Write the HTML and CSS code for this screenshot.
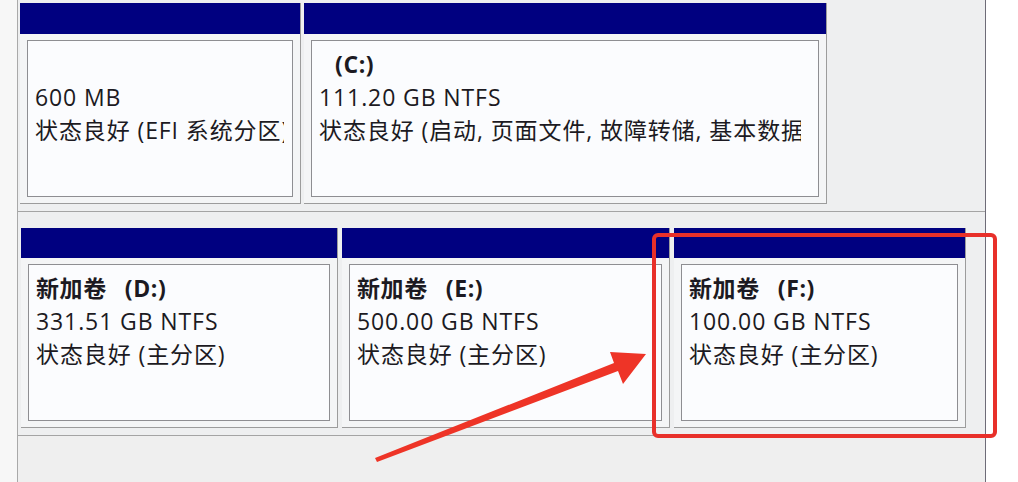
FILE: index.html
```html
<!DOCTYPE html>
<html lang="zh-CN">
<head>
<meta charset="utf-8">
<title>磁盘管理</title>
<link rel="stylesheet" href="styles.css">
</head>
<body>
<div class="window">
  <div class="gutter"></div>
  <div class="main">
    <div class="disk disk-top">
      <div class="cell w-efi">
        <div class="hdr"></div>
        <div class="body">
          <div class="box">
            <div class="clip">
              <div class="line name">&nbsp;</div>
              <div class="line">600 MB</div>
              <div class="line">状态良好 (EFI 系统分区)</div>
            </div>
          </div>
        </div>
      </div>
      <div class="cell w-c">
        <div class="hdr"></div>
        <div class="body">
          <div class="box">
            <div class="clip clip-c">
              <div class="line name"><span class="indent">(C:)</span></div>
              <div class="line">111.20 GB NTFS</div>
              <div class="line">状态良好 (启动, 页面文件, 故障转储, 基本数据分区)</div>
            </div>
          </div>
        </div>
      </div>
    </div>
    <div class="disk disk-bottom">
      <div class="cell w-d">
        <div class="hdr"></div>
        <div class="body">
          <div class="box">
            <div class="clip">
              <div class="line name">新加卷<span class="drive">(D:)</span></div>
              <div class="line">331.51 GB NTFS</div>
              <div class="line">状态良好 (主分区)</div>
            </div>
          </div>
        </div>
      </div>
      <div class="cell w-e">
        <div class="hdr"></div>
        <div class="body">
          <div class="box">
            <div class="clip">
              <div class="line name">新加卷<span class="drive">(E:)</span></div>
              <div class="line">500.00 GB NTFS</div>
              <div class="line">状态良好 (主分区)</div>
            </div>
          </div>
        </div>
      </div>
      <div class="cell w-f">
        <div class="hdr"></div>
        <div class="body">
          <div class="box">
            <div class="clip">
              <div class="line name">新加卷<span class="drive">(F:)</span></div>
              <div class="line">100.00 GB NTFS</div>
              <div class="line">状态良好 (主分区)</div>
            </div>
          </div>
        </div>
      </div>
    </div>
    <div class="rest"></div>
  </div>
  <div class="edge"></div>
</div>
<div class="highlight"></div>
<svg class="arrow" width="1018" height="482" viewBox="0 0 1018 482" aria-hidden="true">
  <polygon points="646,354 610,352 614,363 375,458 377,462 618,371 623,384" fill="#ee3427"/>
</svg>
</body>
</html>
```
FILE: styles.css
```css
html, body {
  margin: 0;
  padding: 0;
}
body {
  width: 1018px;
  height: 482px;
  overflow: hidden;
  background: #efefef;
  font-family: "Open Sans", "Noto Sans CJK SC", sans-serif;
  color: #1c1a22;
  position: relative;
}
.window {
  display: flex;
  height: 482px;
}
.gutter {
  width: 17px;
  flex: none;
  background: #f7f7f7;
  border-right: 1px solid #a9a9a9;
}
.main {
  flex: 1;
  display: flex;
  flex-direction: column;
  background: #eeeff0;
}
.edge {
  width: 32px;
  flex: none;
  background: #ffffff;
  border-left: 1px solid #6e6c78;
}
.disk {
  display: flex;
  align-items: flex-start;
  border-bottom: 1px solid #a4a4a4;
  box-sizing: border-box;
}
.disk-top {
  height: 212px;
  padding: 3px 0 0 2px;
  gap: 3px;
}
.disk-bottom {
  height: 224px;
  padding: 16px 0 0 3px;
  gap: 4px;
}
.rest {
  flex: 1;
  background: #efefef;
}
.cell {
  display: flex;
  flex-direction: column;
  background: #f4f5f6;
  border-right: 1px solid #9c9c9c;
  border-bottom: 1px solid #9c9c9c;
  box-sizing: border-box;
}
.disk-top .cell { height: 201px; }
.disk-bottom .cell { height: 200px; }
.w-efi { width: 281px; }
.w-c { width: 523px; }
.w-d { width: 317px; }
.w-e { width: 328px; }
.w-f { width: 292px; }
.hdr {
  height: 31px;
  flex: none;
  background: #000080;
}
.disk-bottom .hdr { height: 30px; }
.body {
  flex: 1;
  display: flex;
  padding: 6px 7px 6px 7px;
  box-sizing: border-box;
}
.box {
  flex: 1;
  background: #fbfcfe;
  border: 1px solid #8e8e92;
  padding: 7px 8px 0 7px;
  overflow: hidden;
}
.clip {
  overflow: hidden;
  white-space: nowrap;
}
.clip-c {
  margin-right: 9px;
}
.line {
  font-size: 23px;
  line-height: 33px;
  height: 33px;
  letter-spacing: 0.9px;
}
.name {
  font-weight: 700;
  letter-spacing: 0.6px;
}
.indent {
  padding-left: 16px;
}
.drive {
  margin-left: 18px;
}
.highlight {
  position: absolute;
  left: 652px;
  top: 233px;
  width: 337px;
  height: 197px;
  border: 4px solid #e8302a;
  border-radius: 6px;
}
.arrow {
  position: absolute;
  left: 0;
  top: 0;
  pointer-events: none;
}
```
